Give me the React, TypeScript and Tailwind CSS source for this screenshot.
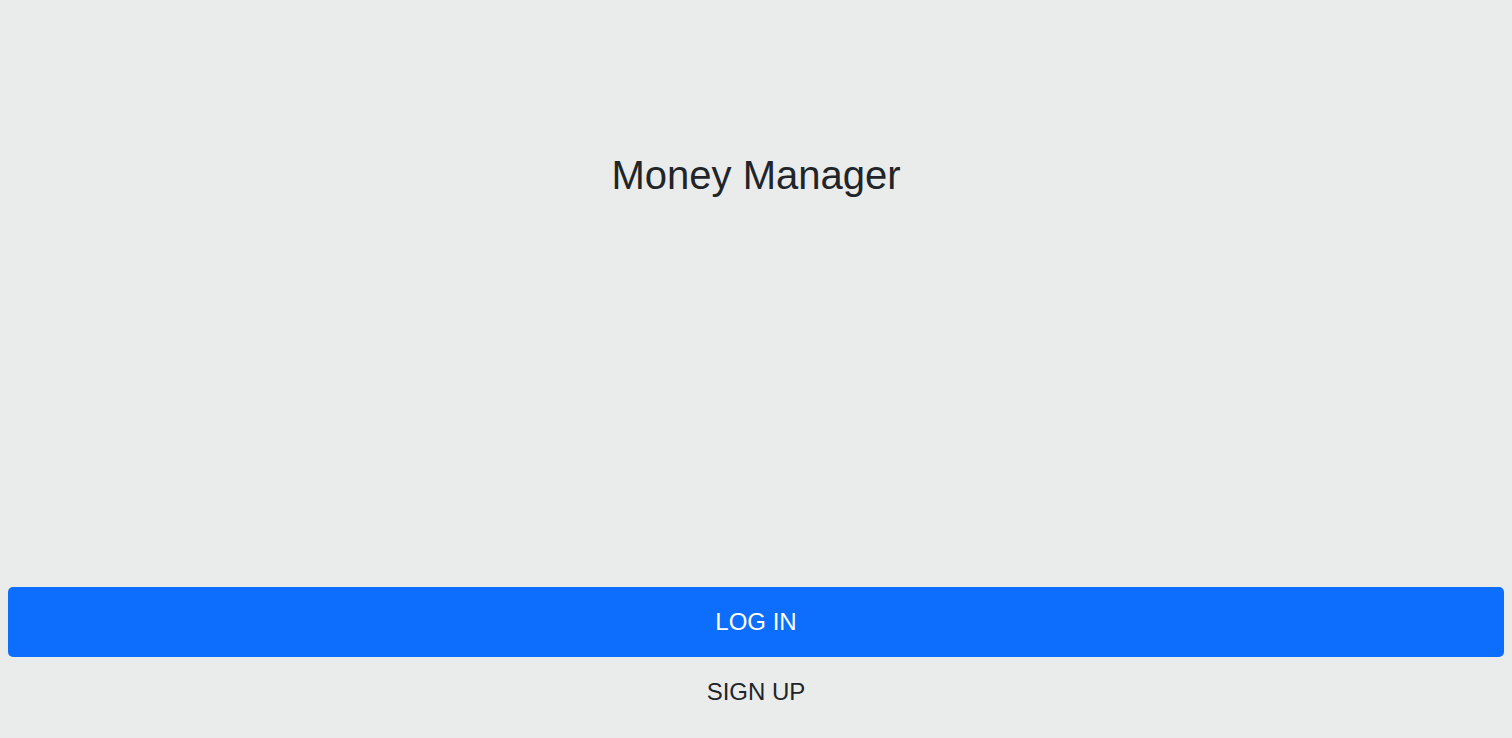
import React from "react";

export default function App() {
  return (
    <div
      className="flex h-screen w-full flex-col bg-[#eaeceb] text-[#212529]"
      style={{ fontFamily: '"Liberation Sans", Arial, sans-serif' }}
    >
      <div className="flex justify-center pt-[151px]">
        <h1 className="text-[40px] leading-[48px] font-normal">Money Manager</h1>
      </div>
      <div className="flex-1" />
      <div className="flex flex-col px-2 pb-[11px]">
        <button className="flex h-[70px] w-full items-center justify-center rounded-[5px] bg-[#0d6efd] text-[24px] leading-none text-white">
          LOG IN
        </button>
        <button className="flex h-[70px] w-full items-center justify-center text-[24px] leading-none text-[#212529]">
          SIGN UP
        </button>
      </div>
    </div>
  );
}
